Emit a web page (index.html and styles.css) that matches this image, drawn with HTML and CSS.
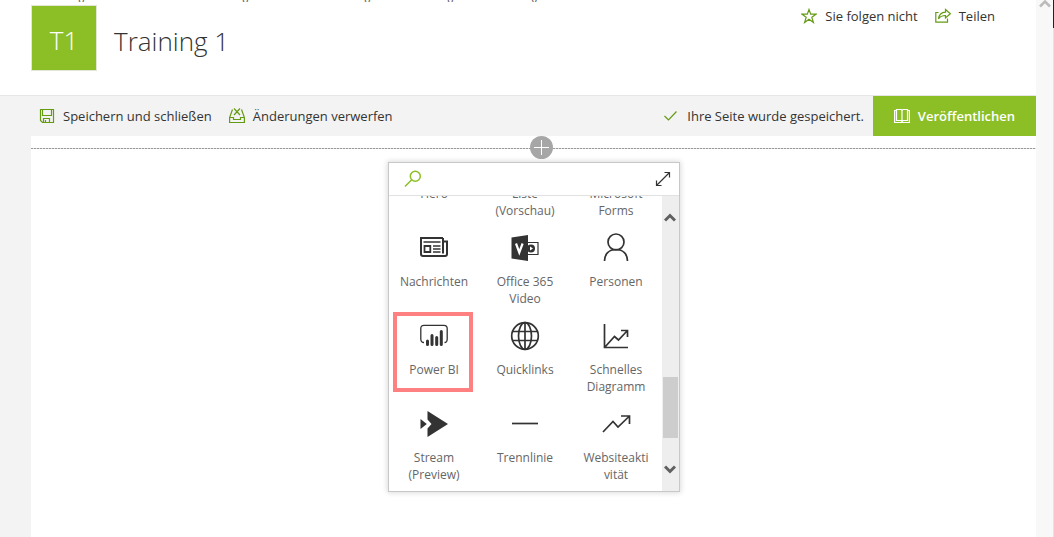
FILE: index.html
```
<!DOCTYPE html>
<html lang="de">
<head>
  <meta charset="UTF-8" />
  <title>Training 1</title>
  <link rel="stylesheet" href="styles.css">
</head>
<body>

  <div class="page">
    <div class="breadcrumb" aria-hidden="true">
      <span>g</span><span>g</span><span>g</span><span>g</span><span>y</span>
    </div>

    <header class="site-header">
      <div class="logo">T1</div>
      <h1>Training 1</h1>
      <div class="site-actions">
        <button class="btn">
          <svg class="ico" width="16" height="16" viewBox="0 0 16 16"><path d="M8 1.5L9.7 6.2H15L10.8 9.3L12.4 14.5L8 11.3L3.6 14.5L5.2 9.3L1 6.2H6.3Z"/></svg>
          Sie folgen nicht
        </button>
        <button class="btn">
          <svg class="ico" width="16" height="16" viewBox="0 0 16 16"><path d="M3.5 4.5H.8V14.2H12.5V10.5M10.5 1.5L15.3 5.8L10.5 10V7.5C7 7.5 5 8.5 3.5 10.8C4 7 6 4.3 10.5 4.1Z"/></svg>
          Teilen
        </button>
      </div>
    </header>

    <div class="toolbar">
      <button class="btn">
        <svg class="ico" width="16" height="16" viewBox="0 0 16 16"><path d="M1.5 1.5H14.5V14.5H3.5L1.5 12.5ZM3.5 1.5V7.5H12.5V1.5M4.5 14.5V10.5H10.5V14.5M6.5 12V14.5"/></svg>
        Speichern und schließen
      </button>
      <button class="btn">
        <svg class="ico" width="16" height="16" viewBox="0 0 16 16"><path d="M3.5 1.5L.6 9.5V14.5H15.4V9.5L12.5 1.5M.6 9.5H4.5V11.5H11.5V9.5H15.4M5 .5L11 7M11 .5L5 7"/></svg>
        Änderungen verwerfen
      </button>
      <span class="status">
        <svg class="ico" width="16" height="16" viewBox="0 0 16 16"><path d="M1.5 8L5.5 12L13.500 3.5"/></svg>
        Ihre Seite wurde gespeichert.
      </span>
      <button class="btn publish">
        <svg class="ico" width="16" height="16" viewBox="0 0 16 16"><path d="M2.5 1.5H7L8 2.5L9 1.5H13.5V12.5H9L8 13.5L7 12.5H2.5ZM8 2.5V13.5M2.5 2.500H.6V14.5H15.4V2.500H13.5"/></svg>
        Veröffentlichen
      </button>
    </div>

    <main class="canvas">
      <div class="divider"></div>
      <button class="add" aria-label="Webpart hinzufügen">
        <svg width="23" height="23" viewBox="0 0 23 23"><path d="M4 11.5H19M11.5 4V19" stroke="#fff" fill="none"/></svg>
      </button>

      <div class="toolbox">
        <div class="search">
          <svg class="search-ico" width="18" height="18" viewBox="0 0 18 18"><circle cx="11.3" cy="6.2" r="5"/><path d="M7.7 9.8L1 16.5"/></svg>
          <input type="text" aria-label="Suchen">
          <button class="expand" aria-label="Erweitern">
            <svg width="16" height="16" viewBox="0 0 16 16"><path d="M1.5 14.5L14.5 1.5M9.5 1.5H14.5V6.5M1.5 9.5V14.5H6.5"/></svg>
          </button>
        </div>
        <div class="list">
          <div class="grid">
            <button class="part"><span class="pic"></span>Hero</button>
            <button class="part"><span class="pic"></span>Liste (Vorschau)</button>
            <button class="part"><span class="pic"></span>Microsoft Forms</button>

            <button class="part">
              <svg class="pic" viewBox="0 0 32 32"><path d="M25 7H3V23Q3 25 5 25H27Q29 25 29 23V10.500H25M25 7V22.500" stroke-width="2"/><path d="M5.500 11H22.500M15 15H22.500M15 18H22.500M15 21H22.500" stroke-width="1.700"/><path d="M6.500 15H12.300V21H6.500Z" stroke-width="1.800"/></svg>
              Nachrichten
            </button>
            <button class="part">
              <svg class="pic" viewBox="0 0 32 32"><path class="solid" d="M2.500 6.500L19 4V30L2.500 27.500Z"/><path d="M18 11.500H29V23.500H18" stroke-width="1.200"/><path d="M7 12.500L10.300 21.500L13.600 12.500" stroke="#fff" stroke-width="2.200"/><circle class="solid" cx="22" cy="17.500" r="4"/><path d="M21 15.500V19.500L24 17.500Z" fill="#fff" stroke="none"/></svg>
              Office 365 Video
            </button>
            <button class="part">
              <svg class="pic" viewBox="0 0 32 32"><circle cx="16" cy="11" r="8"/><path d="M4.500 30C4.500 23 9 18.500 16 18.500S27.500 23 27.500 30"/></svg>
              Personen
            </button>

            <button class="part power">
              <svg class="pic" viewBox="0 0 32 32"><path d="M6 23.500Q2.800 23.500 2.800 20V9.500Q2.800 6.300 6 6.300H26Q29.200 6.300 29.200 9.500V20Q29.200 23.500 26.500 23.500" stroke-width="1.300"/><path d="M9.500 22V25.500M14 16.500V25.500M18.700 18.500V25.500M23.300 12.500V25.500" stroke-width="3" stroke-linecap="round"/></svg>
              Power BI
            </button>
            <button class="part">
              <svg class="pic" viewBox="0 0 32 32"><circle cx="16" cy="17" r="13.300"/><ellipse cx="16" cy="17" rx="6.500" ry="13.300"/><path d="M16 3.700V30.300M4 12.500H28M4 21.500H28"/></svg>
              Quicklinks
            </button>
            <button class="part">
              <svg class="pic" viewBox="0 0 32 32"><path d="M4.500 5V28.500H28M5 28L14.500 17.500L18.500 21L27 12M21 11.500H27.500V18"/></svg>
              Schnelles Diagramm
            </button>

            <button class="part">
              <svg class="pic" viewBox="0 0 32 32"><path class="solid" d="M9.500 4L30 17L9.500 30V21.500L13.500 17L9.500 12.500ZM2.500 12L8.800 17L2.500 22Z"/></svg>
              Stream (Preview)
            </button>
            <button class="part">
              <svg class="pic" viewBox="0 0 32 32"><path d="M3 16.500H29"/></svg>
              Trennlinie
            </button>
            <button class="part">
              <svg class="pic" viewBox="0 0 32 32"><path d="M3 25L13 14.500L18 20L29 9.500M21 9H29.500V17"/></svg>
              Websiteakti<wbr>vität
            </button>
          </div>
          <div class="list-scroll">
            <svg width="12" height="9" viewBox="0 0 12 9"><path d="M1 7.500L6 2.500L11 7.500"/></svg>
            <div class="thumb"></div>
            <svg width="12" height="9" viewBox="0 0 12 9"><path d="M1 1.500L6 6.500L11 1.500"/></svg>
          </div>
        </div>
      </div>
    </main>
  </div>

  <div class="page-scroll">
    <svg width="12" height="8" viewBox="0 0 12 8"><path d="M1 6.500L6 1.500L11 6.500" fill="none" stroke="#bbb" stroke-width="2.500"/></svg>
    <div class="edge"></div>
  </div>

</body>
</html>
```
FILE: styles.css
```
*, *::after { box-sizing: border-box; }
body {
  margin: 0; display: flex; min-height: 100vh;
  background: #fff; color: #333;
  font: 13px/20px "Open Sans", "Noto Sans", sans-serif;
}
svg { display: block; flex: none; }
button {
  border: none; background: none; padding: 0; margin: 0;
  font: inherit; color: inherit; cursor: pointer;
}
.page { flex: 1; min-width: 0; display: flex; flex-direction: column; position: relative; }

/* breadcrumb is scrolled away, only the descenders show */
.breadcrumb {
  position: absolute; top: 0; left: 78px;
  display: grid; grid-template-columns: 164px 122px 83px 84px 10px;
  height: 2px; overflow: hidden; line-height: 1px;
  color: #666;
}

.site-header { display: flex; align-items: flex-start; height: 95px; padding: 5px 41px 0 31px; }
.logo {
  width: 66px; height: 66px;
  background: #8cbf26; border: 1px solid #e1e6d6; color: #fff;
  font-size: 26px; font-weight: 300; line-height: 68px; text-align: center;
}
h1 { margin: 17px 0 0 17px; font-size: 26px; line-height: 38px; font-weight: 300; }
.site-actions { display: flex; gap: 17px; margin: 1px 0 0 auto; }
.btn { display: flex; align-items: center; gap: 8px; white-space: nowrap; }
.ico { fill: none; stroke: #659b14; stroke-width: 1.2; }

.toolbar {
  display: flex; align-items: center; gap: 17px;
  height: 41px; padding-left: 39px; line-height: 21px;
  background: #f3f3f3; border-top: 1px solid #e6e6e6;
}
.status { display: flex; align-items: center; gap: 8px; margin-left: auto; margin-right: -8px; white-space: nowrap; }
.publish {
  align-self: stretch; padding: 0 21px;
  background: #8cbf26; color: #fff; font-weight: 600;
}
.publish .ico { stroke: #fff; }

.canvas {
  flex: 1; position: relative; padding-top: 12px; margin-left: 31px;
  box-shadow: -31px 0 #f3f3f3;
}
.divider { height: 1px; background: repeating-linear-gradient(90deg, #999 0 2px, #ddd 2px 3px); }
.add {
  position: absolute; top: 0; left: calc(50% - 4px);
  border-radius: 50%; background: #a6a6a6;
}

.toolbox {
  width: 292px; margin: 13px auto 0;
  background: #fff; border: 1px solid #c8c8c8;
  box-shadow: 0 0 5px 1px #ddd;
}
.search { display: flex; align-items: center; height: 33px; padding: 0 8px 0 15px; border-bottom: 1px solid #e1e1e1; }
.search input { flex: 1; min-width: 0; border: none; outline: none; font: inherit; background: none; }
.search svg { fill: none; stroke: #333; stroke-width: 1.2; }
.search .search-ico { stroke: #8cbf26; stroke-width: 1.5; }
.list { display: flex; height: 295px; overflow: hidden; }
.grid {
  flex: 1; display: grid; grid-template-columns: repeat(3, 1fr); grid-auto-rows: 88px;
  margin-top: -53px;
}
.part {
  display: block; position: relative; padding: 0 11px; align-self: start;
  font-size: 12px; line-height: 17px; color: #666; text-align: center;
}
.pic {
  display: block; width: 32px; height: 32px; margin: 0 auto 10px;
  fill: none; stroke: #333; stroke-width: 1.7;
}
.pic .solid { fill: #333; stroke: none; }
.power::after {
  content: ""; position: absolute; left: 4px; top: -7px;
  width: 80px; height: 80px; border: 4px solid #ff8080;
}
.list-scroll {
  width: 17px; padding: 17px 1px 17px;
  display: flex; flex-direction: column; align-items: center;
  background: #eee;
}
.list-scroll svg { fill: none; stroke: #606060; stroke-width: 3; }
.thumb { width: 100%; height: 61px; margin: auto 0 27px; background: #cdcdcd; }

.page-scroll { width: 18px; padding: 0 0 0 3px; background: #f8f8f8; border-right: 1px solid #e3e3e3; position: relative; }
.edge { position: absolute; top: 0; right: -1px; width: 1px; height: 28px; background: #222; }
```
